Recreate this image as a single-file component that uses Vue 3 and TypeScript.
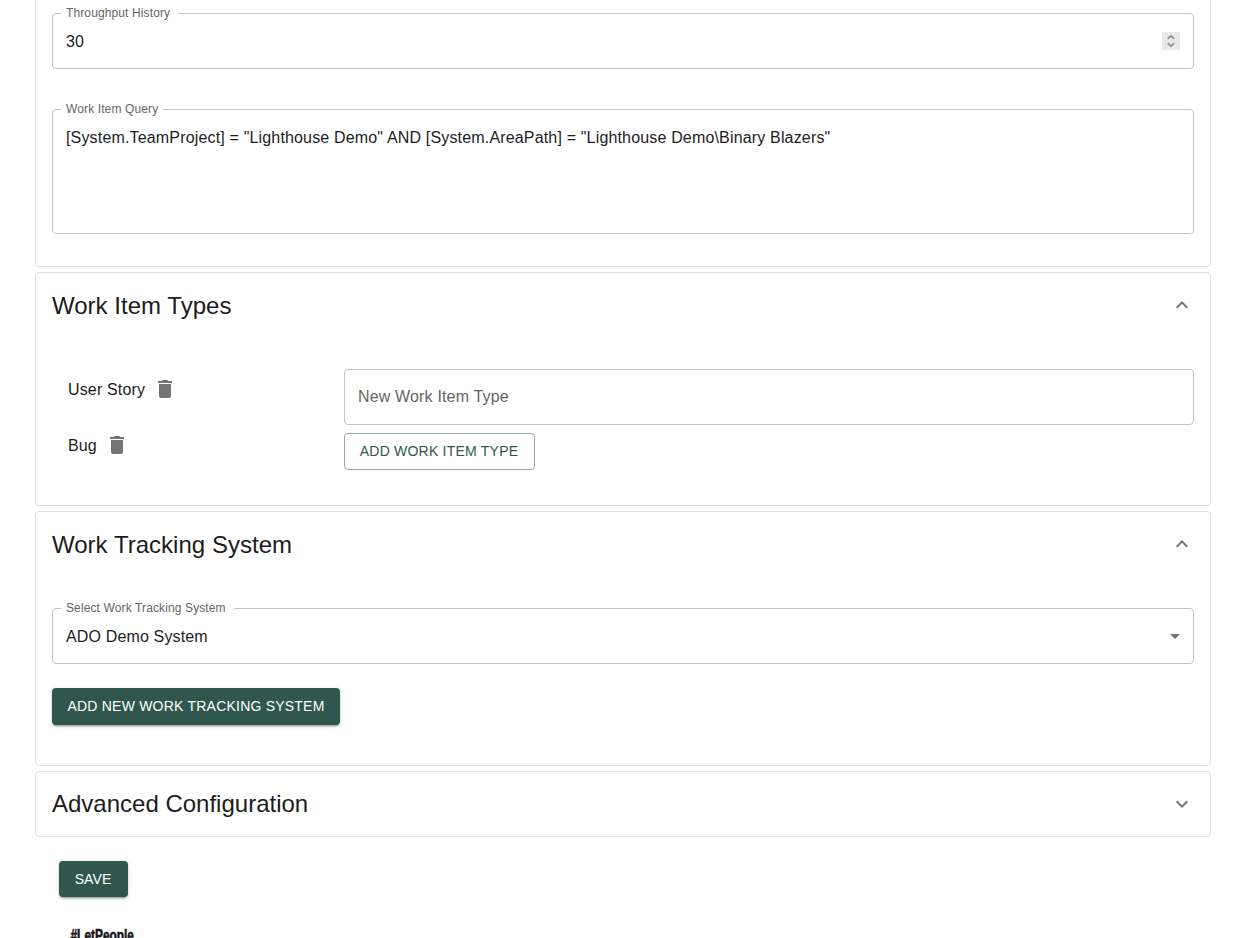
<script setup lang="ts">
import { ref } from 'vue'

const throughput = ref('30')
const query = ref('[System.TeamProject] = "Lighthouse Demo" AND [System.AreaPath] = "Lighthouse Demo\\Binary Blazers"')
const itemTypes = ref<string[]>(['User Story', 'Bug'])
const system = ref('ADO Demo System')
</script>

<template>
  <main class="page">
    <section class="card general">
      <div class="field">
        <span class="label w-throughput"><span>Throughput History</span></span>
        <span class="value">{{ throughput }}</span>
        <span class="spinner">
          <svg width="18" height="18" viewBox="0 0 18 18">
            <path d="M5.7 6.8 9 3.9l3.3 2.9M5.7 11.2 9 14.1l3.3-2.9" />
          </svg>
        </span>
      </div>
      <div class="field area">
        <span class="label w-query"><span>Work Item Query</span></span>
        <span class="value query">{{ query }}</span>
      </div>
    </section>

    <section class="card types">
      <header class="head">
        <h2>Work Item Types</h2>
        <svg class="icon" viewBox="0 0 24 24"><path d="m12 8-6 6 1.41 1.41L12 10.83l4.59 4.58L18 14z" /></svg>
      </header>
      <div class="types-body">
        <ul class="type-list">
          <li v-for="item in itemTypes" :key="item">
            <span class="type-name">{{ item }}</span>
            <svg class="icon" viewBox="0 0 24 24"><path d="M6 19c0 1.1.9 2 2 2h8c1.1 0 2-.9 2-2V7H6zM19 4h-3.500l-1-1h-5l-1 1H5v2h14z" /></svg>
          </li>
        </ul>
        <div class="new-type">
          <div class="field"><span class="placeholder">New Work Item Type</span></div>
          <button class="btn outlined">ADD WORK ITEM TYPE</button>
        </div>
      </div>
    </section>

    <section class="card tracking">
      <header class="head">
        <h2>Work Tracking System</h2>
        <svg class="icon" viewBox="0 0 24 24"><path d="m12 8-6 6 1.41 1.41L12 10.83l4.59 4.58L18 14z" /></svg>
      </header>
      <div class="field">
        <span class="label w-select"><span>Select Work Tracking System</span></span>
        <span class="value">{{ system }}</span>
        <svg class="icon arrow" viewBox="0 0 24 24"><path d="m7 10 5 5 5-5z" /></svg>
      </div>
      <button class="btn filled add-system">ADD NEW WORK TRACKING SYSTEM</button>
    </section>

    <section class="card advanced">
      <header class="head">
        <h2>Advanced Configuration</h2>
        <svg class="icon" viewBox="0 0 24 24"><path d="M16.590 8.590 12 13.170 7.410 8.590 6 10l6 6 6-6z" /></svg>
      </header>
    </section>

    <button class="btn filled save">SAVE</button>

    <footer class="brand">
      <svg width="66" height="20" viewBox="0 0 66 20">
        <text x="0.500" y="14" textLength="63.500" lengthAdjust="spacingAndGlyphs">#LetPeople</text>
      </svg>
    </footer>
  </main>
</template>

<style>
body {
  overflow: hidden;
  background: #fff;
}
</style>

<style scoped>
* {
  box-sizing: border-box;
}

.page {
  width: 1233px;
  height: 938px;
  padding: 0 22px 0 35px;
  overflow: hidden;
  display: flex;
  flex-direction: column;
  align-items: flex-start;
  background: #fff;
  color: #1c1c1e;
  font-family: "Liberation Sans", Arial, sans-serif;
  font-size: 16px;
  line-height: 24px;
}

.card {
  width: 1176px;
  flex: none;
  padding: 0 16px;
  border: 1px solid #e0e0e0;
  border-radius: 4px;
  margin-bottom: 5px;
}

.general {
  height: 267px;
  padding-top: 13px;
  border-top: 0;
  border-radius: 0 0 4px 4px;
}

.types {
  height: 234px;
}

.tracking {
  height: 255px;
}

.advanced {
  height: 66px;
  margin-bottom: 24px;
}

.head {
  height: 64px;
  display: flex;
  align-items: center;
  justify-content: space-between;
}

h2 {
  margin: 2px 0 0;
  font-size: 24px;
  line-height: 32px;
  font-weight: 400;
  letter-spacing: 0.02px;
}

.advanced h2 {
  margin-top: 0;
  letter-spacing: 0;
}

.icon {
  width: 24px;
  height: 24px;
  flex: none;
  fill: #757575;
}

.field {
  position: relative;
  display: flex;
  align-items: center;
  height: 56px;
  padding: 0 13px;
  border: 1px solid #c4c4c4;
  border-radius: 4px;
}

.area {
  height: 125px;
  margin-top: 40px;
  padding-top: 14px;
  align-items: flex-start;
}

.label {
  position: absolute;
  top: -8px;
  left: 8px;
  height: 14px;
  padding-left: 5px;
  background: #fff;
  color: #666;
  font-size: 12px;
  line-height: 14px;
  letter-spacing: 0.12px;
  white-space: nowrap;
}

.w-throughput {
  width: 117px;
}

.w-query {
  width: 102px;
}

.w-select {
  width: 173px;
}

.value {
  flex: 1;
  padding-top: 2px;
  letter-spacing: 0.15px;
}

.query {
  letter-spacing: 0.165px;
}

.placeholder {
  color: #666;
  letter-spacing: 0.16px;
}

.spinner {
  width: 18px;
  height: 18px;
  background: #e9e9e9;
}

.spinner svg {
  display: block;
  fill: none;
  stroke: #8c9090;
  stroke-width: 1.7;
}

.types-body {
  display: flex;
  padding-top: 32px;
}

.type-list {
  width: 292px;
  margin: 0;
  padding: 0 0 0 16px;
  list-style: none;
  letter-spacing: 0.15px;
}

.type-list li {
  display: flex;
  align-items: center;
  gap: 8px;
  height: 40px;
  margin-bottom: 16px;
}

.type-name {
  padding-top: 2px;
}

.new-type {
  flex: 1;
}

.btn {
  display: block;
  height: 37px;
  padding: 0 0 2px;
  border: 0;
  border-radius: 4px;
  font-family: inherit;
  font-size: 14px;
  line-height: 24px;
  letter-spacing: 0.22px;
  white-space: nowrap;
}

.outlined {
  width: 191px;
  margin-top: 8px;
  padding-right: 1px;
  border: 1px solid #97aba6;
  background: #fff;
  color: #30574e;
}

.filled {
  background: #30574e;
  color: #fff;
  box-shadow: 0 3px 1px -2px rgba(0, 0, 0, 0.2), 0 2px 2px 0 rgba(0, 0, 0, 0.14), 0 1px 5px 0 rgba(0, 0, 0, 0.12);
}

.tracking .field {
  margin-top: 32px;
  padding-right: 6px;
}

.add-system {
  width: 288px;
  margin-top: 24px;
}

.save {
  flex: none;
  width: 69px;
  height: 36px;
  margin-left: 24px;
  padding: 0 1px 0 0;
  letter-spacing: 0.1px;
}

.brand {
  flex: none;
  margin: 30px 0 0 35px;
}

.brand svg {
  display: block;
}

.brand text {
  font-family: "Liberation Sans", Arial, sans-serif;
  font-size: 17px;
  font-weight: 700;
  fill: #15181c;
  stroke: #15181c;
  stroke-width: 0.6px;
}
</style>
